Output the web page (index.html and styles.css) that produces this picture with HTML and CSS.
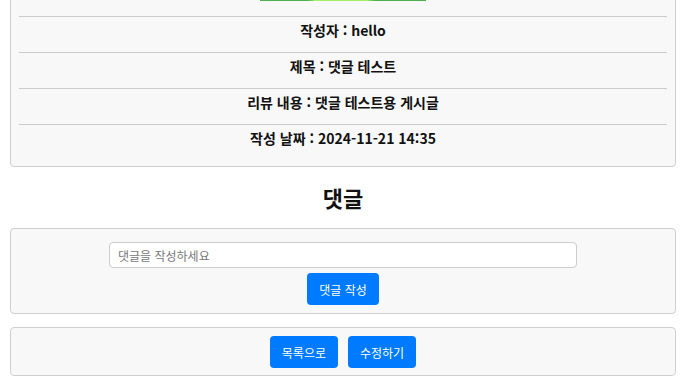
FILE: index.html
```html
<!DOCTYPE html>
<html lang="ko">
	<head>
		<meta charset="utf-8">
		<title>리뷰 상세</title>
		<link rel="stylesheet" href="styles.css">
	</head>
	<body>
		<div class="page">
			<div class="card detail">
				<div class="review-image"></div>
				<div class="row">작성자 : hello</div>
				<div class="row">제목 : 댓글 테스트</div>
				<div class="row">리뷰 내용 : 댓글 테스트용 게시글</div>
				<div class="row">작성 날짜 : 2024-11-21 14:35</div>
			</div>

			<h2 class="section-title">댓글</h2>

			<div class="card comment-form">
				<input type="text" class="comment-input" placeholder="댓글을 작성하세요">
				<button class="btn">댓글 작성</button>
			</div>

			<div class="card actions">
				<button class="btn">목록으로</button>
				<button class="btn">수정하기</button>
			</div>
		</div>
	</body>
</html>
```

FILE: styles.css
```css
body {
	margin: 0;
	overflow: hidden;
	font-family: "Noto Sans CJK KR", "Noto Sans", sans-serif;
	color: #111;
	background: #fff;
}
.page {
	width: 666px;
	margin-left: 10px;
}
.card {
	box-sizing: border-box;
	background-color: #f8f8f8;
	border: 1px solid #cfcfcf;
	border-radius: 4px;
}
/* page is scrolled down, the top of the detail card sits above the window */
.detail {
	margin-top: -158px;
	padding: 8px 8px 6px;
}
.review-image {
	width: 166px;
	height: 150px;
	margin: 0 auto 15px;
	background: linear-gradient(to right, #4caf50 0, #4caf50 47px, #7dd45a 53px, #a6ef6a 54px, #a6ef6a 107px, #7dd45a 110px, #4caf50 116px, #4caf50 166px);
}
.row {
	border-top: 1px solid #cccccc;
	padding: 3px 0 12px;
	line-height: 20px;
	font-size: 14px;
	font-weight: bold;
	text-align: center;
}
.section-title {
	margin: 15px 0 16px;
	font-size: 22px;
	line-height: 30px;
	text-align: center;
}
.comment-form {
	padding: 8px;
	display: flex;
	flex-direction: column;
	align-items: center;
}
.comment-input {
	box-sizing: border-box;
	width: 468px;
	height: 26px;
	margin: 5px 0;
	padding: 0 8px;
	border: 1px solid #ccc;
	border-radius: 4px;
	background: #fff;
	font-family: inherit;
	font-size: 12px;
}
.comment-input::placeholder {
	color: #777;
}
.btn {
	height: 32px;
	padding: 0 12px;
	border: none;
	border-radius: 4px;
	background-color: #007bff;
	color: #fff;
	font-family: inherit;
	font-size: 12px;
}
.actions {
	margin-top: 13px;
	padding: 8px 8px 7px;
	display: flex;
	justify-content: center;
	gap: 10px;
}
```
